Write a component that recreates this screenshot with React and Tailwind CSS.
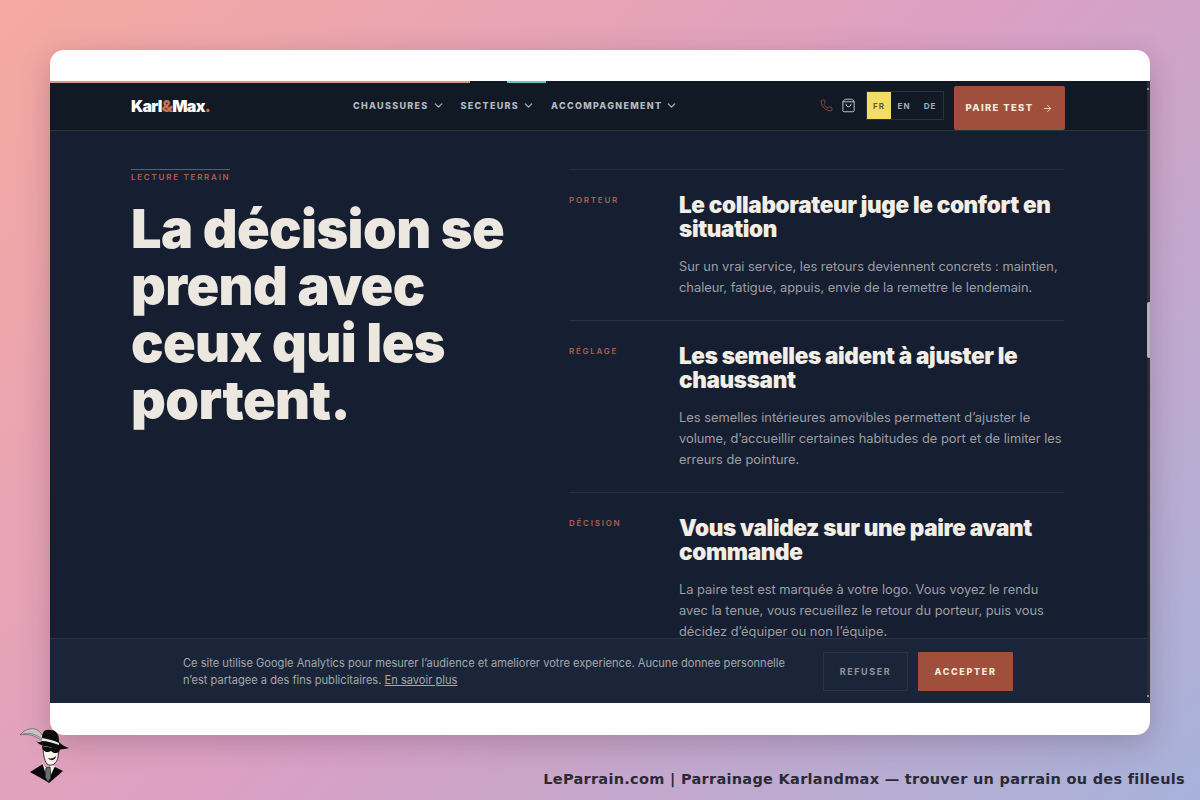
import { ChevronDown, Phone, ShoppingBag, ArrowRight } from 'lucide-react';

const display = "font-['Inter','Liberation_Sans',sans-serif]";

const steps = [
  {
    label: 'PORTEUR',
    title: 'Le collaborateur juge le confort en situation',
    text: 'Sur un vrai service, les retours deviennent concrets : maintien, chaleur, fatigue, appuis, envie de la remettre le lendemain.',
    cls: 'h-[151px]',
  },
  {
    label: 'RÉGLAGE',
    title: 'Les semelles aident à ajuster le chaussant',
    text: 'Les semelles intérieures amovibles permettent d’ajuster le volume, d’accueillir certaines habitudes de port et de limiter les erreurs de pointure.',
    cls: 'h-[172px]',
  },
  {
    label: 'DÉCISION',
    title: 'Vous validez sur une paire avant commande',
    text: 'La paire test est marquée à votre logo. Vous voyez le rendu avec la tenue, vous recueillez le retour du porteur, puis vous décidez d’équiper ou non l’équipe.',
    cls: 'h-[172px]',
  },
];

function NavItem({ children }) {
  return (
    <span className="flex items-center gap-[3px] text-[9px] font-extrabold tracking-[1.3px] text-[#b4b9c1]">
      {children}
      <ChevronDown size={13} strokeWidth={2} />
    </span>
  );
}

function Mascot() {
  return (
    <svg width="60" height="60" viewBox="0 0 60 60" className="absolute left-[15px] top-[725px]">
      {/* feather */}
      <path d="M5 10C9 5 15 3 20 4C24 5 27 9 29 14L26 15C21 11 13 8 5 10Z" fill="#c9c5c6" stroke="#4a4a4a" strokeWidth="0.6" />
      <path d="M8 9C14 7 21 9 27 14" fill="none" stroke="#5a5a5a" strokeWidth="0.6" />
      {/* suit */}
      <path d="M15 47L28 39L33 44L40 42L48 46L34 58L31 56Z" fill="#0a0a0a" />
      {/* collar and shirt */}
      <path d="M27 37L32 44L36 40L40 41L35 52L31 50Z" fill="#f3efe9" />
      <path d="M31 43L35 42L36 53L33 57L30 52Z" fill="#6d6d6d" stroke="#111" strokeWidth="0.7" />
      {/* face */}
      <path d="M28 20L44 23L43 32C42 39 36 42 32 39C29 35 28 28 28 20Z" fill="#f6f1ea" stroke="#111" strokeWidth="0.8" />
      <path d="M27 21L45 24L44 27C41 29 38 28 36 26C33 28 30 27 28 25Z" fill="#0a0a0a" />
      <path d="M33 33C36 34 39 33 41 31C41 35 36 37 33 33Z" fill="#222" />
      {/* hat */}
      <path d="M21 16C24 18 26 17 27 16C27 8 28 4 35 5C41 5 44 8 44 17C47 20 50 22 54 23C48 25 41 25 35 22C29 21 24 20 21 16Z" fill="#0a0a0a" />
      <path d="M27 13C32 14 38 15 44 18L44 20C38 18 32 16 27 16Z" fill="#e9e6e2" />
    </svg>
  );
}

export default function App() {
  return (
    <div className="relative h-[800px] w-[1200px] overflow-hidden bg-[linear-gradient(135deg,#f6a9a0_0%,#dca0c4_50%,#a6b2da_100%)] font-['Inter',sans-serif]">
      <div className="absolute left-[50px] top-[50px] h-[685px] w-[1100px] overflow-hidden rounded-[14px] bg-white pt-[31px] shadow-[0_8px_30px_rgba(60,30,60,0.25)]">
        <div className="relative h-[622px] w-[1097px] overflow-hidden bg-[#161f32]">
          <header className="flex h-[50px] items-center border-b border-[#2a313f] bg-[#111a24] pl-[81px] pr-[82px]">
            <div className={`${display} w-[222px] text-[16px] font-black tracking-[-0.7px] text-white`}>
              Karl<span className="text-[#c8734f]">&amp;</span>Max<span className="text-[#c8734f]">.</span>
            </div>
            <nav className={`${display} flex gap-[16px]`}>
              <NavItem>CHAUSSURES</NavItem>
              <NavItem>SECTEURS</NavItem>
              <NavItem>ACCOMPAGNEMENT</NavItem>
            </nav>
            <div className="ml-auto flex h-full items-center">
              <Phone size={13} strokeWidth={1.5} className="mr-[8px] text-[#a5524a]" />
              <ShoppingBag size={15} strokeWidth={1.5} className="mr-[10px] text-[#c8ccd2]" />
              <div className={`${display} mr-[10px] flex h-[29px] border border-[#2a313f] text-[8px] font-bold tracking-[1px] text-[#a9aeb6]`}>
                <span className="flex w-[24px] items-center justify-center bg-[#f5dc62] text-[#5a5a3c]">FR</span>
                <span className="flex w-[26px] items-center justify-center">EN</span>
                <span className="flex w-[26px] items-center justify-center">DE</span>
              </div>
              <button className={`${display} flex h-[44px] w-[111px] items-center justify-center gap-[9px] self-end rounded-[2px] bg-[#9f4f3b] text-[9.5px] font-extrabold tracking-[1.35px] text-[#f5ebdf]`}>
                PAIRE TEST
                <ArrowRight size={11} strokeWidth={1.75} />
              </button>
            </div>
          </header>

          {/* scroll progress */}
          <div className="absolute left-0 top-0 h-[2px] w-[420px] bg-[#e0957c]" />
          <div className="absolute left-[457px] top-0 h-[2px] w-[39px] bg-[#5cc8cf]" />

          <main className={`${display} flex pl-[81px] pt-[38px]`}>
            <section className="w-[438px]">
              <div className="w-[99px] border-t border-[#6b5a58] pt-[1px] text-[8px] font-semibold leading-[12px] tracking-[1.75px] whitespace-nowrap text-[#a9604f]">
                LECTURE TERRAIN
              </div>
              <h1 className="mt-[17px] w-[385px] text-[54px] font-black leading-[57px] tracking-[-0.6px] text-[#ece8df]">
                La décision se prend avec ceux qui les portent.
              </h1>
            </section>
            <section className="w-[495px] shrink-0">
              {steps.map(s => (
                <article key={s.label} className={`flex border-t border-[#293143] pt-[23px] ${s.cls}`}>
                  <div className="w-[110px] shrink-0 pt-[1px] text-[8px] font-semibold leading-[12px] tracking-[1.75px] text-[#a9604f]">
                    {s.label}
                  </div>
                  <div>
                    <h3 className="text-[22.5px] font-black leading-[24px] tracking-[-0.35px] text-[#f2eee6]">{s.title}</h3>
                    <p className="mt-[14.5px] text-[12.85px] leading-[21.4px] text-[#9e9ea2]">{s.text}</p>
                  </div>
                </article>
              ))}
            </section>
          </main>

          {/* cookie banner */}
          <div className={`${display} absolute bottom-0 left-0 flex h-[65px] w-full items-center border-t border-[#2a3244] bg-[#1b2539] pl-[133px]`}>
            <p className="mt-[2px] w-[640px] pr-[30px] text-[11.1px] leading-[17px] text-[#a5a7aa]">
              Ce site utilise Google Analytics pour mesurer l’audience et ameliorer votre experience. Aucune donnee personnelle n’est partagee a des fins publicitaires. <span className="underline">En savoir plus</span>
            </p>
            <button className="flex h-[39px] w-[85px] items-center justify-center border border-[#2a3244] pt-[2px] text-[9px] font-bold tracking-[1.6px] text-[#92969d]">
              REFUSER
            </button>
            <button className="ml-[10px] flex h-[39px] w-[95px] items-center justify-center rounded-[1px] bg-[#9f4f3b] pt-[2px] text-[9px] font-extrabold tracking-[1.65px] text-[#f5ebdf]">
              ACCEPTER
            </button>
          </div>
        </div>
        {/* scrollbar */}
        <div className="absolute left-[1097px] top-[31px] h-[622px] w-[3px] bg-[#2e2c33]" />
        <div className="absolute left-[1097px] top-[252px] h-[56px] w-[3px] rounded-l-[2px] bg-[#b6b2b4]" />
        <div className="absolute left-[1097px] top-[38px] h-[2px] w-[2px] bg-[#8b8b90]" />
        <div className="absolute left-[1097px] top-[645px] h-[2px] w-[2px] bg-[#8b8b90]" />
      </div>
      <Mascot />
      <div className="absolute bottom-[9px] right-[15px] font-['DejaVu_Sans',sans-serif] text-[14.5px] font-bold tracking-[0.29px] text-[#2a2a35]">
        LeParrain.com | Parrainage Karlandmax — trouver un parrain ou des filleuls
      </div>
    </div>
  );
}
